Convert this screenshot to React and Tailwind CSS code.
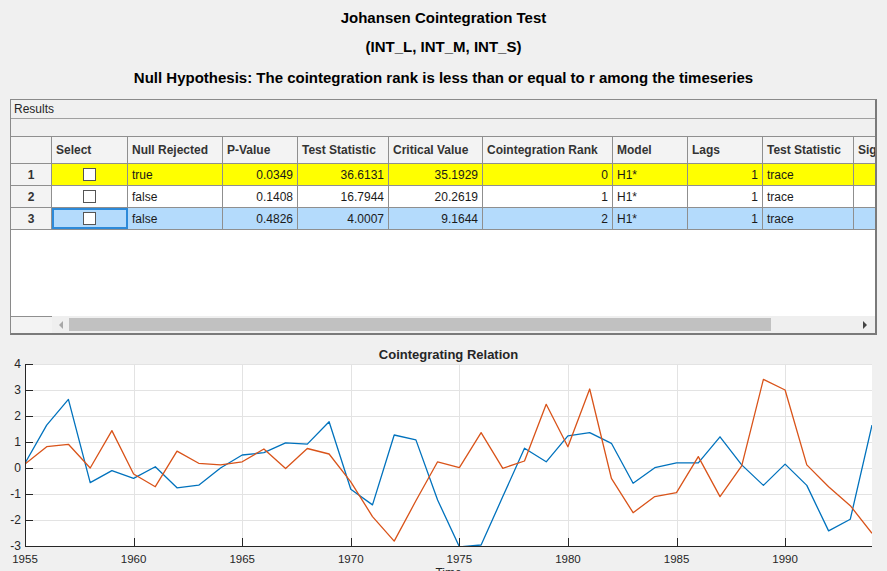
import React from 'react';

const columns = [
  { label: 'Select', w: 'w-[76px]' },
  { label: 'Null Rejected', w: 'w-[95px]' },
  { label: 'P-Value', w: 'w-[75px]' },
  { label: 'Test Statistic', w: 'w-[91px]' },
  { label: 'Critical Value', w: 'w-[94px]' },
  { label: 'Cointegration Rank', w: 'w-[130px]' },
  { label: 'Model', w: 'w-[75px]' },
  { label: 'Lags', w: 'w-[75px]' },
  { label: 'Test Statistic', w: 'w-[91px]' },
  { label: 'Significance Level', w: 'w-[120px]' },
];

const rows = [
  { rejected: 'true', p: '0.0349', stat: '36.6131', crit: '35.1929', rank: '0', bg: 'bg-[#ffff00]' },
  { rejected: 'false', p: '0.1408', stat: '16.7944', crit: '20.2619', rank: '1', bg: 'bg-white' },
  { rejected: 'false', p: '0.4826', stat: '4.0007', crit: '9.1644', rank: '2', bg: 'bg-[#b4dbfc]', selected: true },
];

const blue = [0.18, 1.65, 2.64, -0.56, -0.1, -0.4, 0.05, -0.76, -0.66, 0, 0.5, 0.59, 0.97, 0.92, 1.78, -0.82, -1.42, 1.27, 1.08, -1.23,
  -3.03, -2.96, -1.1, 0.76, 0.24, 1.24, 1.36, 0.95, -0.59, 0.01, 0.2, 0.2, 1.2, 0.12, -0.67, 0.15, -0.67, -2.42, -1.97, 1.65];
const orange = [0.15, 0.82, 0.91, 0, 1.44, -0.23, -0.72, 0.65, 0.18, 0.12, 0.24, 0.73, -0.02, 0.75, 0.54, -0.53, -1.87, -2.81, -1.26, 0.24,
  0.01, 1.36, -0.01, 0.27, 2.45, 0.82, 3.04, -0.4, -1.72, -1.1, -0.95, 0.44, -1.1, 0.08, 3.41, 3.0, 0.12, -0.72, -1.45, -2.51];

// axes box inside the svg (svg starts at page y = 357)
const AX = { left: 25, right: 872, top: 7, bottom: 189 };
const xOf = (i) => AX.left + i * ((AX.right - AX.left) / 39);
const yOf = (v) => AX.top + (4 - v) * 26;
const toPoints = (arr) => arr.map((v, i) => `${xOf(i).toFixed(1)},${yOf(v).toFixed(1)}`).join(' ');

const Cell = ({ w, align = 'left', children, className = '' }) => (
  <div
    className={`${w} shrink-0 h-full border-r border-[#8f8f8f] flex items-center px-[4px] ${
      align === 'right' ? 'justify-end' : 'justify-start'
    } ${className}`}
  >
    {children}
  </div>
);

const Checkbox = () => (
  <div className="w-[13px] h-[13px] bg-white border border-[#555555]" />
);

const ResultsTable = () => (
  <div className="h-[180px] bg-white overflow-hidden">
    {/* Header */}
    <div className="flex h-[28px] border-t border-b border-[#8f8f8f] bg-[#f3f3f3] font-bold text-[#333333] w-max">
      <div className="w-[41px] shrink-0 h-full border-r border-[#8f8f8f]" />
      {columns.map((c, i) => (
        <Cell key={i} w={c.w}>
          <span className="whitespace-nowrap">{c.label}</span>
        </Cell>
      ))}
    </div>

    {/* Rows */}
    {rows.map((r, i) => (
      <div key={i} className="flex h-[22px] border-b border-[#8f8f8f] text-[#1a1a1a] w-max">
        <div className="w-[41px] shrink-0 h-full border-r border-[#8f8f8f] bg-[#f3f3f3] flex items-center justify-center font-bold text-[#333333]">
          {i + 1}
        </div>
        <div className={`flex h-full ${r.bg}`}>
          <div
            className={`w-[76px] shrink-0 h-full border-r border-[#8f8f8f] flex items-center justify-center ${
              r.selected ? 'outline-2 -outline-offset-2 outline-[#2d8ad9]' : ''
            }`}
          >
            <Checkbox />
          </div>
          <Cell w="w-[95px]">{r.rejected}</Cell>
          <Cell w="w-[75px]" align="right">{r.p}</Cell>
          <Cell w="w-[91px]" align="right">{r.stat}</Cell>
          <Cell w="w-[94px]" align="right">{r.crit}</Cell>
          <Cell w="w-[130px]" align="right">{r.rank}</Cell>
          <Cell w="w-[75px]">H1*</Cell>
          <Cell w="w-[75px]" align="right">1</Cell>
          <Cell w="w-[91px]">trace</Cell>
          <Cell w="w-[120px]" align="right">0.05</Cell>
        </div>
      </div>
    ))}
  </div>
);

const ScrollBar = () => (
  <div className="flex h-[17px]">
    <div className="w-[41px] shrink-0 border-t border-[#8f8f8f] bg-[#f3f3f3]" />
    <div className="flex-1 flex items-center bg-[#efefef] pl-[5px] pr-[6px]">
      <svg width="8" height="10" viewBox="0 0 8 10" className="shrink-0">
        <path d="M6 1 L2 5 L6 9 Z" fill="#a8a8a8" />
      </svg>
      <div className="ml-[4px] w-[702px] h-[13px] bg-[#c1c1c1]" />
      <div className="flex-1" />
      <svg width="8" height="10" viewBox="0 0 8 10" className="shrink-0">
        <path d="M2 1 L6 5 L2 9 Z" fill="#444444" />
      </svg>
    </div>
  </div>
);

const Chart = () => {
  const xTicks = [1955, 1960, 1965, 1970, 1975, 1980, 1985, 1990];
  const yTicks = [4, 3, 2, 1, 0, -1, -2, -3];
  return (
    <svg width="887" height="214" className="block" style={{ fontFamily: '"Liberation Sans", Arial, sans-serif' }}>
      <defs>
        <clipPath id="axes-clip">
          <rect x={AX.left} y={AX.top - 1} width={AX.right - AX.left} height={AX.bottom - AX.top + 2} />
        </clipPath>
      </defs>
      <rect x={AX.left} y={AX.top} width={AX.right - AX.left} height={AX.bottom - AX.top} fill="#ffffff" />
      {/* grid */}
      {yTicks.map((v) => (
        <line key={`gy${v}`} x1={AX.left} x2={AX.right} y1={yOf(v) + 0.5} y2={yOf(v) + 0.5} stroke="#e3e3e3" strokeWidth="1" />
      ))}
      {xTicks.map((yr) => {
        const x = Math.round(xOf(yr - 1955)) + 0.5;
        return <line key={`gx${yr}`} x1={x} x2={x} y1={AX.top} y2={AX.bottom} stroke="#e3e3e3" strokeWidth="1" />;
      })}
      {/* series */}
      <g clipPath="url(#axes-clip)" fill="none" strokeWidth="1.3" strokeLinejoin="round">
        <polyline points={toPoints(blue)} stroke="#0072bd" />
        <polyline points={toPoints(orange)} stroke="#d95319" />
      </g>
      {/* axis lines */}
      <line x1={AX.left + 0.5} x2={AX.left + 0.5} y1={AX.top} y2={AX.bottom + 1} stroke="#262626" strokeWidth="1" />
      <line x1={AX.left} x2={AX.right} y1={AX.bottom + 0.5} y2={AX.bottom + 0.5} stroke="#262626" strokeWidth="1" />
      {/* ticks */}
      {yTicks.map((v) => (
        <line key={`ty${v}`} x1={AX.left} x2={AX.left + 8} y1={yOf(v) + 0.5} y2={yOf(v) + 0.5} stroke="#262626" strokeWidth="1" />
      ))}
      {xTicks.map((yr) => {
        const x = Math.round(xOf(yr - 1955)) + 0.5;
        return <line key={`tx${yr}`} x1={x} x2={x} y1={AX.bottom - 8} y2={AX.bottom} stroke="#262626" strokeWidth="1" />;
      })}
      {/* labels */}
      {yTicks.map((v) => (
        <text key={`ly${v}`} x={21} y={yOf(v) + 4} textAnchor="end" fontSize="12" fill="#262626">
          {v}
        </text>
      ))}
      {xTicks.map((yr) => (
        <text key={`lx${yr}`} x={xOf(yr - 1955)} y={206} textAnchor="middle" fontSize="11.5" fill="#262626">
          {yr}
        </text>
      ))}
      <text x={448.5} y={220} textAnchor="middle" fontSize="12" fill="#262626">
        Time
      </text>
    </svg>
  );
};

export default function App() {
  return (
    <div
      className="w-[887px] h-[571px] overflow-hidden bg-[#f0f0f0] text-[12px] text-[#1a1a1a]"
      style={{ fontFamily: '"Liberation Sans", Arial, sans-serif' }}
    >
      {/* Titles */}
      <div className="pt-[9px] text-center font-bold text-[15px] text-black">
        <div className="leading-[18px]">Johansen Cointegration Test</div>
        <div className="mt-[11px] leading-[18px]">(INT_L, INT_M, INT_S)</div>
        <div className="mt-[13px] leading-[18px]">
          Null Hypothesis: The cointegration rank is less than or equal to r among the timeseries
        </div>
      </div>

      {/* Results panel */}
      <div className="mt-[12px] mx-[10px] h-[236px] border-t border-l border-[#8a8a8a] border-r-2 border-b-2 border-r-[#7a7a7a] border-b-[#7a7a7a] bg-[#f0f0f0] flex flex-col overflow-hidden">
        <div className="h-[19px] border-b border-[#a0a0a0] pl-[3px] flex items-center text-[#262626]">Results</div>
        <div className="h-[17px]" />
        <ResultsTable />
        <ScrollBar />
      </div>

      {/* Chart */}
      <div className="h-[22px] pt-[11px] pl-[25px] pr-[15px] text-center font-bold text-[13px] leading-[18px] text-[#262626]">
        Cointegrating Relation
      </div>
      <Chart />
    </div>
  );
}
